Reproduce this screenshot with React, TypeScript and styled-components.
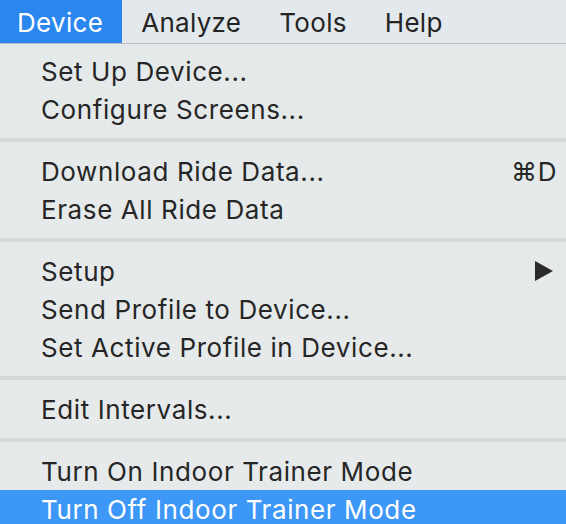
import React from "react";
import styled, { createGlobalStyle } from "styled-components";

const Global = createGlobalStyle`
  html, body {
    margin: 0;
    padding: 0;
    overflow: hidden;
    background: #e6eaea;
  }
  body {
    font-family: Inter, "Noto Sans", "Liberation Sans", sans-serif;
    -webkit-font-smoothing: antialiased;
  }
`;

const Page = styled.div`
  width: 566px;
  height: 524px;
  overflow: hidden;
  display: flex;
  flex-direction: column;
  background: linear-gradient(180deg, #e4e9e9 0%, #e7eaeb 100%);
`;

const MenuBar = styled.div`
  height: 43px;
  flex: none;
  display: flex;
  align-items: stretch;
  background: #e3e8ec;
  border-bottom: 1px solid #babdc0;
`;

const MenuTitle = styled.div<{ $active?: boolean }>`
  display: flex;
  align-items: center;
  padding: 2px 19px 0 ${(p) => (p.$active ? "17px" : "19px")};
  font-size: 26px;
  letter-spacing: 0.3px;
  color: ${(p) => (p.$active ? "#ffffff" : "#242424")};
  background: ${(p) => (p.$active ? "#2b87f0" : "transparent")};
`;

const Menu = styled.div`
  display: flex;
  flex-direction: column;
  padding-top: 8px;
`;

const Item = styled.div<{ $highlight?: boolean }>`
  height: 38px;
  flex: none;
  display: flex;
  align-items: center;
  justify-content: space-between;
  padding: 0 9px 0 41px;
  font-size: 26px;
  letter-spacing: 0.6px;
  color: ${(p) => (p.$highlight ? "#ffffff" : "#262626")};
  background: ${(p) => (p.$highlight ? "#3d97f7" : "transparent")};
`;

const Shortcut = styled.span`
  font-size: 26px;
  letter-spacing: 0.6px;
`;

const Separator = styled.div`
  height: 4px;
  margin: 10px 0;
  background: #d5d9da;
`;

const Arrow = () => (
  <svg width="20" height="20" viewBox="0 0 20 20" style={{ marginRight: 3 }}>
    <polygon points="1,0 19,10 1,20" fill="#2b2b2b" />
  </svg>
);

type Entry =
  | { kind: "item"; label: string; shortcut?: string; submenu?: boolean; highlight?: boolean }
  | { kind: "sep" };

const entries: Entry[] = [
  { kind: "item", label: "Set Up Device..." },
  { kind: "item", label: "Configure Screens..." },
  { kind: "sep" },
  { kind: "item", label: "Download Ride Data...", shortcut: "⌘D" },
  { kind: "item", label: "Erase All Ride Data" },
  { kind: "sep" },
  { kind: "item", label: "Setup", submenu: true },
  { kind: "item", label: "Send Profile to Device..." },
  { kind: "item", label: "Set Active Profile in Device..." },
  { kind: "sep" },
  { kind: "item", label: "Edit Intervals..." },
  { kind: "sep" },
  { kind: "item", label: "Turn On Indoor Trainer Mode" },
  { kind: "item", label: "Turn Off Indoor Trainer Mode", highlight: true },
];

export default function App() {
  return (
    <>
      <Global />
      <Page>
        <MenuBar>
          <MenuTitle $active>Device</MenuTitle>
          <MenuTitle>Analyze</MenuTitle>
          <MenuTitle>Tools</MenuTitle>
          <MenuTitle>Help</MenuTitle>
        </MenuBar>
        <Menu>
          {entries.map((e, i) =>
            e.kind === "sep" ? (
              <Separator key={i} />
            ) : (
              <Item key={i} $highlight={e.highlight}>
                <span>{e.label}</span>
                {e.shortcut && <Shortcut>{e.shortcut}</Shortcut>}
                {e.submenu && <Arrow />}
              </Item>
            )
          )}
        </Menu>
      </Page>
    </>
  );
}
